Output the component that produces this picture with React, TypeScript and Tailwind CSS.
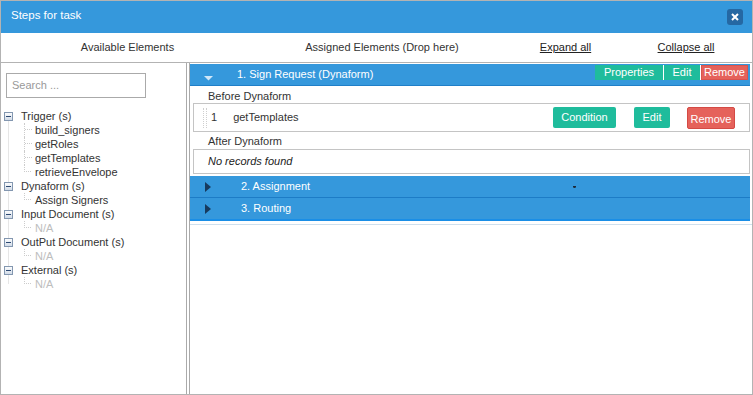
import React from "react";

const tree = [
  { label: "Trigger (s)", items: ["build_signers", "getRoles", "getTemplates", "retrieveEnvelope"] },
  { label: "Dynaform (s)", items: ["Assign Signers"] },
  { label: "Input Document (s)", items: [] as string[] },
  { label: "OutPut Document (s)", items: [] as string[] },
  { label: "External (s)", items: [] as string[] },
];

function MinusBox() {
  return (
    <svg width="9" height="9" viewBox="0 0 9 9" className="shrink-0">
      <defs>
        <linearGradient id="mb" x1="0" y1="0" x2="0" y2="1">
          <stop offset="0" stopColor="#ffffff" />
          <stop offset="1" stopColor="#cfd9e6" />
        </linearGradient>
      </defs>
      <rect x="0.5" y="0.5" width="8" height="8" fill="url(#mb)" stroke="#8397b0" />
      <line x1="2" y1="4.5" x2="7" y2="4.5" stroke="#2d4a73" strokeWidth="1" />
    </svg>
  );
}

function ChildRow({ text, last, na }: { text: string; last: boolean; na?: boolean }) {
  return (
    <div className="flex h-[14px] items-start">
      {last ? (
        <span className="ml-[20px] h-[7px] w-[7px] border-l border-b border-dotted border-[#cccccc]" />
      ) : (
        <span className="ml-[20px] h-[14px] w-[7px] border-l border-dotted border-[#cccccc]">
          <span className="block h-[7px] w-[7px] border-b border-dotted border-[#cccccc]" />
        </span>
      )}
      <span className={"ml-[4px] leading-[14px] " + (na ? "text-[#bdbdbd]" : "text-[#333]")}>{text}</span>
    </div>
  );
}

function HeaderBar({ title, open, children }: { title: string; open?: boolean; children?: React.ReactNode }) {
  return (
    <div
      className={
        "flex h-[22px] bg-[#3598dc] border-b " +
        (open ? "border-[#1f7fc8]" : "border-[#1d7cc6]")
      }
    >
      <div className="flex w-[47px] items-center pl-[14px]">
        {open ? (
          <svg width="9" height="5" viewBox="0 0 9 5" className="mt-[7px]">
            <path d="M0 0 L9 0 L4.5 4.5 Z" fill="#cfe6f8" />
          </svg>
        ) : (
          <svg width="6" height="10" viewBox="0 0 6 10" className="ml-[1px]">
            <path d="M0 0 L6 5 L0 10 Z" fill="#173a5e" />
          </svg>
        )}
      </div>
      <div className={"flex items-center text-white " + (open ? "" : "pl-[4px]")}>{title}</div>
      {children}
    </div>
  );
}

export default function App() {
  return (
    <div className="flex h-[395px] w-[753px] flex-col border border-[#b3b3b3] bg-white font-['Liberation_Sans',Arial,sans-serif] text-[11px] text-[#333]">
      {/* title bar */}
      <div className="flex h-[32px] shrink-0 items-center justify-between bg-[#3598dc] pl-[10px] pr-[9px] pb-[3px]">
        <span className="text-[11.5px] text-white">Steps for task</span>
        <div className="mt-[3px] flex h-[16px] w-[16px] items-center justify-center rounded-[3px] bg-[#2568a3]">
          <svg width="8" height="8" viewBox="0 0 8 8">
            <path d="M1 1 L7 7 M7 1 L1 7" stroke="#fff" strokeWidth="2" />
          </svg>
        </div>
      </div>

      {/* column labels */}
      <div className="flex h-[30px] shrink-0 items-center border-b border-[#b3b3b3]">
        <div className="w-[253px] text-center">Available Elements</div>
        <div className="w-[256px] text-center">Assigned Elements (Drop here)</div>
        <div className="w-[111px] text-center text-[#222] underline">Expand all</div>
        <div className="w-[130px] text-center text-[#222] underline">Collapse all</div>
      </div>

      <div className="flex min-h-0 flex-1">
        {/* left: available elements */}
        <div className="w-[186px] shrink-0 border-r border-[#aaa] pl-[5px] pt-[10px]">
          <div className="flex h-[25px] w-[140px] items-center border border-[#aaa] pl-[5px] text-[#999]">
            Search ...
          </div>
          <div className="relative mt-[11px] -ml-[2px]">
            <div className="absolute left-[4px] top-[7px] h-[168px] w-px bg-[#e6e6e6]" />
            {tree.map((g) => (
              <div key={g.label}>
                <div className="relative flex h-[14px] items-center">
                  <MinusBox />
                  <span className="ml-[8px] leading-[14px] text-[#333]">{g.label}</span>
                </div>
                {g.items.length > 0
                  ? g.items.map((it, i) => (
                      <ChildRow key={it} text={it} last={i === g.items.length - 1} />
                    ))
                  : <ChildRow text="N/A" last na />}
              </div>
            ))}
          </div>
        </div>

        {/* right: assigned elements */}
        <div className="ml-[2px] flex-1 border-l border-[#aaa] pt-[1px]">
          <div className="mr-[2px]">
            <HeaderBar title="1. Sign Request (Dynaform)" open>
              <div className="ml-auto mr-[2px] mt-[1px] flex h-[15px]">
                <div className="flex w-[69px] items-center justify-center border-r border-white bg-[#1fbc9c] text-white">Properties</div>
                <div className="flex w-[37px] items-center justify-center border-r border-white bg-[#1fbc9c] text-white">Edit</div>
                <div className="flex w-[47px] items-center justify-center border border-[#d9534f] bg-[#e5625b] text-white">Remove</div>
              </div>
            </HeaderBar>

            <div className="h-[17px] pl-[18px] pt-[4px] leading-[13px]">Before Dynaform</div>
            <div className="ml-[3px] flex h-[29px] items-center border border-[#c4c4c4] pr-[14px]">
              <span className="ml-[9px] h-[20px] w-[4px] border-x border-dotted border-[#cfcfcf]" />
              <span className="ml-[4px]">1</span>
              <span className="ml-[16px]">getTemplates</span>
              <div className="ml-auto flex items-center">
                <div className="flex h-[21px] w-[63px] items-center justify-center rounded-[2px] bg-[#1fbc9c] text-white">Condition</div>
                <div className="ml-[18px] flex h-[21px] w-[36px] items-center justify-center rounded-[2px] bg-[#1fbc9c] text-white">Edit</div>
                <div className="ml-[17px] mt-[1px] flex h-[22px] w-[48px] items-center justify-center rounded-[2px] border border-[#d44a44] bg-[#e5625b] pt-[2px] text-white">Remove</div>
              </div>
            </div>

            <div className="h-[17px] pl-[18px] pt-[3px] leading-[13px]">After Dynaform</div>
            <div className="ml-[3px] flex h-[25px] items-center border border-[#c4c4c4] pl-[14px] italic text-[#222]">
              No records found
            </div>

            <div className="relative mt-[2px]">
              <HeaderBar title="2. Assignment" />
              <span className="absolute left-[383px] top-[10px] h-[2px] w-[3px] rounded-b-full bg-[#1b2a3a]" />
            </div>
            <div className="flex h-[23px] border-b-2 border-[#1a8ee6] bg-[#3598dc]">
              <div className="flex w-[47px] items-center pl-[15px]">
                <svg width="6" height="10" viewBox="0 0 6 10">
                  <path d="M0 0 L6 5 L0 10 Z" fill="#173a5e" />
                </svg>
              </div>
              <div className="flex items-center pl-[4px] text-white">3. Routing</div>
            </div>
          </div>
          <div className="mt-[3px] h-px bg-[#cfe0ee]" />
        </div>
      </div>
    </div>
  );
}
